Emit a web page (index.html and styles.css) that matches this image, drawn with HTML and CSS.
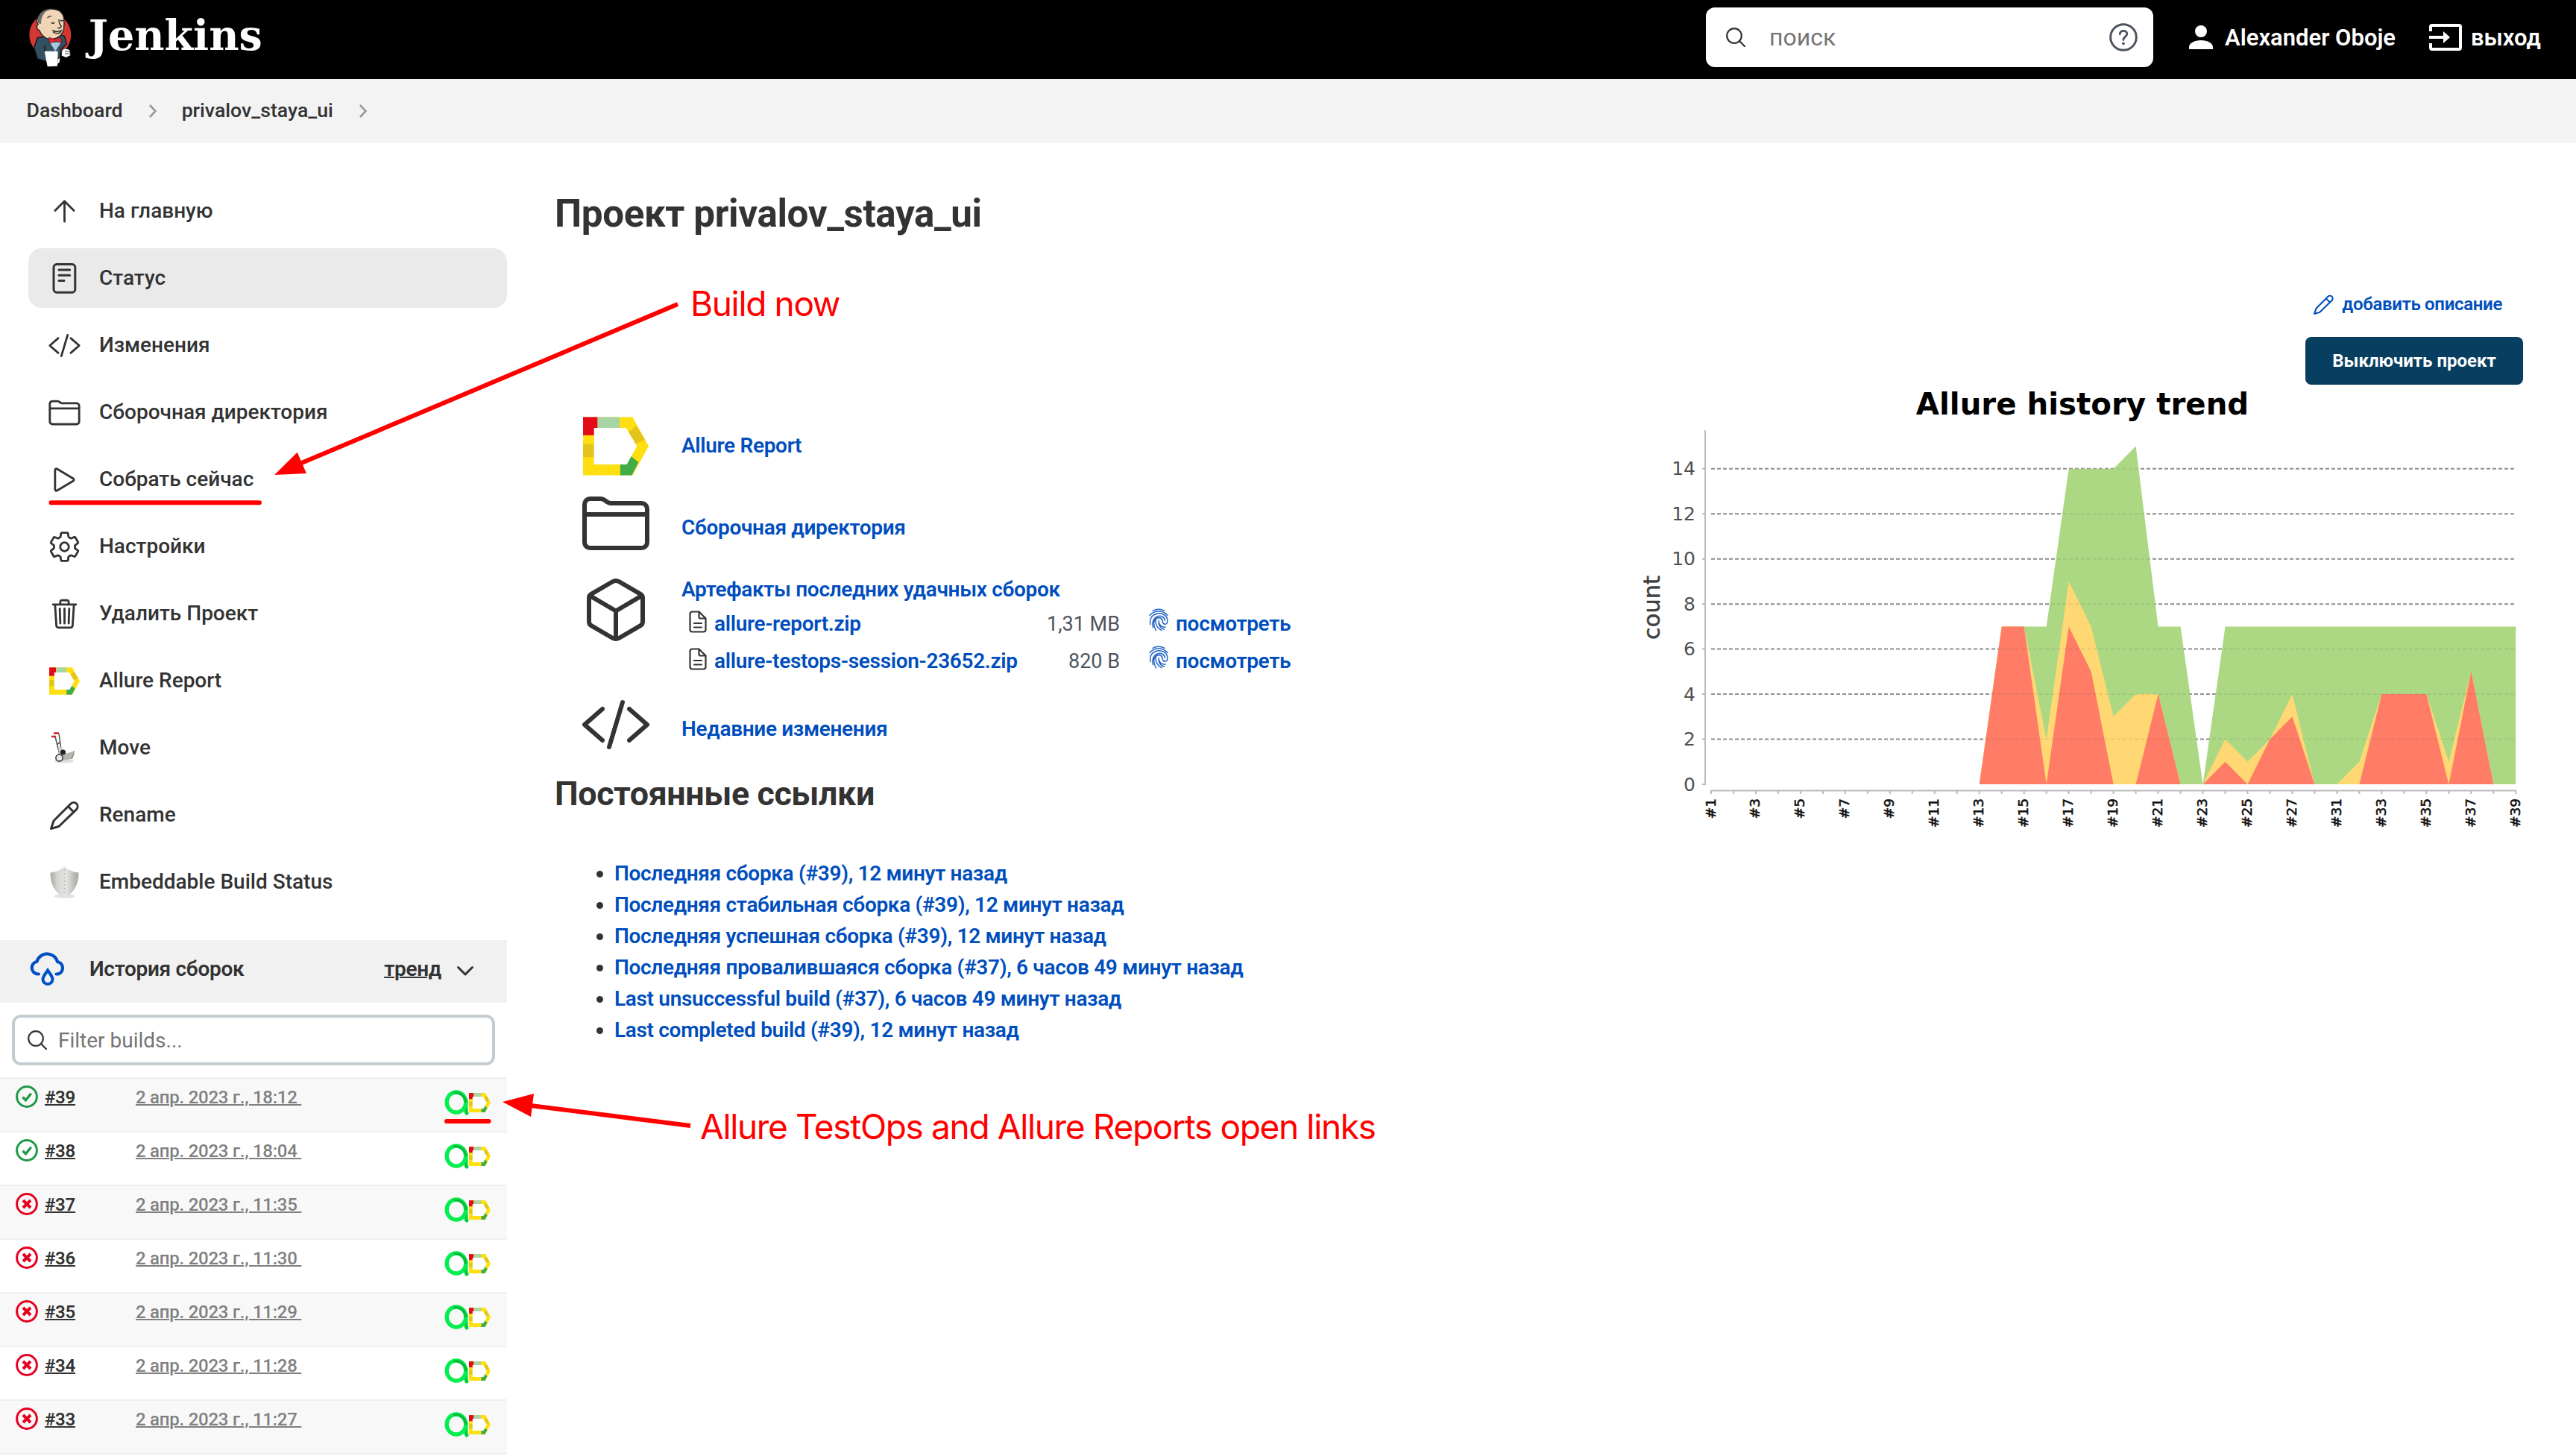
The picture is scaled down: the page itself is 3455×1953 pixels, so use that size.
FILE: index.html
```html
<!DOCTYPE html>
<html lang="ru">
<head>
<meta charset="utf-8">
<title>privalov_staya_ui [Jenkins]</title>
<link rel="stylesheet" href="styles.css">
</head>
<body>
<svg class="sprite" aria-hidden="true">
  <symbol id="i-up" viewBox="0 0 512 512"><path d="M112 244 256 100l144 144M256 120v292" class="ln"/></symbol>
  <symbol id="i-status" viewBox="0 0 45 45"><rect x="8" y="3.6" width="28.8" height="37.6" rx="4" class="ln3"/><path d="M15 11h14.6M15 18.2h14.6M15 25.4h7" class="ln3"/></symbol>
  <symbol id="i-code" viewBox="0 0 512 512"><path d="M160 368 32 256l128-112M352 368l128-112-128-112M304 96l-96 320" class="ln"/></symbol>
  <symbol id="i-folder" viewBox="0 0 512 512"><path d="M440 432H72a40 40 0 0 1-40-40V120a40 40 0 0 1 40-40h75.890a40 40 0 0 1 22.190 6.720l27.840 18.560A40 40 0 0 0 220.110 112H440a40 40 0 0 1 40 40v240a40 40 0 0 1-40 40ZM32 192h448" class="ln"/></symbol>
  <symbol id="i-play" viewBox="0 0 512 512"><path d="M112 111v290c0 17.440 17 28.520 31 20.160l247.900-148.370c12.120-7.250 12.120-26.330 0-33.580L143 90.840c-14-8.360-31 2.720-31 20.160z" class="ln"/></symbol>
  <symbol id="i-gear" viewBox="0 0 512 512"><circle cx="256" cy="256" r="66" class="ln"/><path d="M416.390 256a154.340 154.340 0 0 1-1.530 20.790l45.210 35.460a10.810 10.810 0 0 1 2.450 13.750l-42.770 74a10.810 10.810 0 0 1-13.140 4.590l-44.900-18.080a16.110 16.110 0 0 0-15.170 1.750A164.480 164.480 0 0 1 325 400.800a15.940 15.940 0 0 0-8.820 12.140l-6.730 47.890a11.080 11.080 0 0 1-10.680 9.170h-85.540a11.110 11.110 0 0 1-10.690-8.870l-6.720-47.820a16.070 16.070 0 0 0-9-12.220 155.300 155.300 0 0 1-21.460-12.570 16 16 0 0 0-15.110-1.710l-44.890 18.070a10.810 10.810 0 0 1-13.140-4.580l-42.770-74a10.800 10.800 0 0 1 2.450-13.750l38.210-30a16.050 16.050 0 0 0 6-14.080c-.360-4.170-.580-8.330-.580-12.500s.210-8.270.580-12.350a16 16 0 0 0-6.070-13.940l-38.190-30A10.810 10.810 0 0 1 49.480 186l42.770-74a10.810 10.810 0 0 1 13.140-4.590l44.900 18.080a16.110 16.110 0 0 0 15.170-1.750A164.480 164.480 0 0 1 187 111.200a15.940 15.940 0 0 0 8.820-12.140l6.730-47.890A11.080 11.080 0 0 1 213.230 42h85.540a11.110 11.110 0 0 1 10.690 8.870l6.720 47.820a16.070 16.070 0 0 0 9 12.220 155.300 155.300 0 0 1 21.460 12.570 16 16 0 0 0 15.110 1.710l44.890-18.070a10.810 10.810 0 0 1 13.140 4.580l42.770 74a10.800 10.800 0 0 1-2.450 13.750l-38.210 30a16.050 16.050 0 0 0-6.050 14.080c.330 4.140.550 8.300.550 12.470z" class="ln"/></symbol>
  <symbol id="i-trash" viewBox="0 0 512 512"><path d="M112 112l20 320c.950 18.490 14.400 32 32 32h184c17.670 0 30.870-13.510 32-32l20-320M80 112h352M192 112V72a23.930 23.930 0 0 1 24-24h80a23.930 23.930 0 0 1 24 24v40M256 176v224M184 176l8 224M328 176l-8 224" class="ln"/></symbol>
  <symbol id="i-allure" viewBox="0 0 90 80">
    <path fill="#ffdf10" d="M0 0h68l22 40-22 40H0z"/>
    <path fill="#e30b17" d="M0 0h20v25H0z"/><path fill="#a8d4a6" d="M20 0h30v15H20z"/>
    <path fill="#e2c518" d="M0 37h15v18H0zM59 24l14-12 12 19-13 6z"/>
    <path fill="#40ad49" d="M51 80V63l14-10 11 9-9 18z"/>
    <path class="hole" d="M15 15h44l15 25-14 25H15z"/>
  </symbol>
  <symbol id="i-pencil" viewBox="0 0 45 45"><path d="M4.500 40.500 8 30 31 7a5.400 5.400 0 0 1 7.600 0 5.400 5.400 0 0 1 0 7.600L15 37.500ZM27.500 10.800l7 7.200" class="ln3"/></symbol>
  <symbol id="i-truck" viewBox="0 0 45 45">
    <ellipse cx="22" cy="40" rx="13" ry="2.500" fill="#ddd"/>
    <path d="M10 7 16 31M15 3l3 22M12 18l4-3" stroke="#555" stroke-width="1.600" fill="none"/>
    <path d="M14 23l5-3 3 11-6 2z" fill="#c9ccc7"/><path d="M18 31l17-4v5l-2 5-14 2z" fill="#b4b6b1"/><path d="M35 26v4l-3 7" stroke="#777" fill="none"/>
    <path d="M5 7h6M8 2.500h7" stroke="#d2232a" stroke-width="2.500"/>
    <circle cx="20.500" cy="28" r="3.500" fill="#222"/><circle cx="15.500" cy="35.500" r="4.600" fill="#e8e8e8" stroke="#333" stroke-width="1.500"/>
  </symbol>
  <symbol id="i-shield" viewBox="0 0 45 45">
    <linearGradient id="sg"><stop offset="0" stop-color="#a6a8a3"/><stop offset=".25" stop-color="#d3d5d0"/><stop offset=".55" stop-color="#e6e7e4"/><stop offset="1" stop-color="#a3a5a0"/></linearGradient>
    <ellipse cx="22.500" cy="41" rx="14" ry="3" fill="#e2e2e2"/>
    <path d="M22.500 1C17 7 9 9 3.500 9.500 3.500 24 9 37 22.500 43 36 37 41.500 24 41.500 9.500 36 9 28 7 22.500 1z" fill="url(#sg)"/><path d="M22.500 5v34" stroke="#b9bbb6" stroke-width="2" stroke-dasharray="2 3"/>
  </symbol>
  <symbol id="i-search" viewBox="0 0 26 26"><circle cx="11" cy="11" r="9.800" class="ln2"/><path d="M18 18l7 7.200" class="ln2"/></symbol>
  <symbol id="i-chev" viewBox="0 0 12 20"><path d="M2 2l7.500 8L2 18" fill="none" stroke="#999" stroke-width="2.600"/></symbol>
  <symbol id="i-cube" viewBox="0 0 512 512"><path d="M448 341.370V170.610A32 32 0 0 0 432.110 143l-152-88.460a47.940 47.940 0 0 0-48.240 0L79.890 143A32 32 0 0 0 64 170.610v170.760A32 32 0 0 0 79.890 369l152 88.460a48 48 0 0 0 48.240 0l152-88.460A32 32 0 0 0 448 341.370zM69 153.990l187 110 187-110M256 463.990v-200" class="ln"/></symbol>
  <symbol id="i-doc" viewBox="0 0 24 30"><path d="M4.500 1.500h9l9 9v15a3 3 0 0 1-3 3h-15a3 3 0 0 1-3-3v-21a3 3 0 0 1 3-3zM13.500 1.500v7a2 2 0 0 0 2 2h7M7 17h10M7 22.500h10" class="ln2"/></symbol>
  <symbol id="i-finger" viewBox="0 0 26 32"><g fill="none" stroke="#2766c6" stroke-width="1.500" stroke-linecap="round">
    <path d="M5 3.300a18 18 0 0 1 16 0M1 9.500C7 2.300 19 2.300 25 9.500M2 21.500C-2 4 24 2 24.800 16c.1 3-.8 5-3 5.200-3.600.3-3.300-2.700-4-5.200-1.500-5-8.600-4-8.800 1-.1 5 3 10.500 8 12.500M5.500 25.500C1.500 8 21 6.500 21.400 16.500M9.500 30C0 12 17 8.500 18 16.500M13 16.500c0 5.500 4 9 9 8.600M13 20c1 4.500 3.500 7 7.500 8"/></g></symbol>
  <symbol id="i-ok" viewBox="0 0 32 32"><circle cx="16" cy="16" r="13.400" fill="none" stroke="#1e9a48" stroke-width="3"/><path d="M10.500 16.800l4 4 7.200-9" fill="none" stroke="#1e9a48" stroke-width="3.400"/></symbol>
  <symbol id="i-fail" viewBox="0 0 32 32"><circle cx="16" cy="16" r="13.400" fill="none" stroke="#e6001f" stroke-width="3"/><path d="M11 11l10 10M21 11 11 21" fill="none" stroke="#e6001f" stroke-width="4"/></symbol>
  <symbol id="i-testops" viewBox="0 0 32 34"><path d="M28.500 14v13c0 2 .4 3.500 1 4" fill="none" stroke="#00cf3c" stroke-width="5" stroke-linecap="round"/><ellipse cx="15.500" cy="16.500" rx="12.800" ry="13.500" fill="none" stroke="#05ee50" stroke-width="5.400"/><path d="M12 3.800C20 2.500 27.500 8 28.500 17" fill="none" stroke="#06b83c" stroke-width="3"/></symbol>
</svg>

<header class="topbar">
  <a class="brand">
    <svg class="butler" viewBox="50 25 180 248">
      <ellipse cx="141" cy="138" rx="84" ry="86" fill="#d33833"/>
      <path d="M90 150 76 190l14 45 40 12 50-12 5-40 22-20-8-30-22-10z" fill="#335061" stroke="#111" stroke-width="4"/>
      <path d="M98 60c-14 12-12 30-6 36-8 6-6 22 6 24 4 16 22 34 42 36 30 0 54-18 56-46 2-30 8-74-48-76-26 0-44 10-50 26z" fill="#f0d6b7" stroke="#222" stroke-width="4"/>
      <path d="M150 34c-34-2-66 22-58 58l12 2c0-18 6-38 20-50z" fill="#6d6b6d"/>
      <path d="M130 70q8-10 16-6M146 88q6 8 12 0M182 78q6 8 12 2M176 76q0 18 10 28-4 10-16 6M150 120q20 12 38-2M152 126q20 14 34-2" fill="none" stroke="#222" stroke-width="4"/>
      <path d="M140 170l22 34 24-38z" fill="#a9c7dd"/>
      <path d="M136 148l22 8 24-8 4 22-24-6-24 8z" fill="#e02a2f" stroke="#611" stroke-width="2"/>
      <path d="M118 204h54l-2 60-40 2z" fill="#fff"/><path d="M120 180v24M175 232v20" stroke="#111" stroke-width="4"/><path d="M172 236l8-4-2 18-8 4z" fill="#fff"/>
      <path d="M188 200l12-8 20 6 2 24-18 8-18-8z" fill="#fff" stroke="#222" stroke-width="3"/><path d="M200 204l16 2M200 213l16 2" stroke="#333" stroke-width="3"/>
    </svg>
    <span class="brand-name">Jenkins</span>
  </a>
  <div class="search">
    <svg class="ic-search"><use href="#i-search"/></svg>
    <span class="search-text">поиск</span>
    <svg class="ic-help" viewBox="0 0 38 38"><circle cx="19" cy="19" r="17.300" fill="none" stroke="#4d545d" stroke-width="3"/><path d="M14.300 14.800c.2-6 9.500-5.800 9.500-.3 0 3.700-4.900 3.700-4.900 8" fill="none" stroke="#4d545d" stroke-width="2.800" stroke-linecap="round"/><circle cx="18.900" cy="27.300" r="1.900" fill="#4d545d"/></svg>
  </div>
  <a class="user"><svg viewBox="0 0 32 32"><circle cx="16" cy="8" r="8" fill="#fff"/><path d="M0 32v-3c0-5 7-9 16-9s16 4 16 9v3z" fill="#fff"/></svg><span>Alexander Oboje</span></a>
  <a class="logout"><svg viewBox="0 0 44 36"><path d="M2 10V4a2 2 0 0 1 2-2h36a2 2 0 0 1 2 2v28a2 2 0 0 1-2 2H4a2 2 0 0 1-2-2v-6" fill="none" stroke="#fff" stroke-width="4"/><path d="M0 18h22" stroke="#fff" stroke-width="4"/><path d="M19 10l9 8-9 8z" fill="#fff"/></svg><span>выход</span></a>
</header>

<nav class="crumbs">
  <a>Dashboard</a><svg><use href="#i-chev"/></svg><a>privalov_staya_ui</a><svg><use href="#i-chev"/></svg>
</nav>

<div class="page">
  <aside>
    <div class="tasks">
      <a><svg><use href="#i-up"/></svg><span>На главную</span></a>
      <a class="active"><svg><use href="#i-status"/></svg><span>Статус</span></a>
      <a><svg><use href="#i-code"/></svg><span>Изменения</span></a>
      <a><svg><use href="#i-folder"/></svg><span>Сборочная директория</span></a>
      <a><svg><use href="#i-play"/></svg><span>Собрать сейчас</span></a>
      <a><svg><use href="#i-gear"/></svg><span>Настройки</span></a>
      <a><svg><use href="#i-trash"/></svg><span>Удалить Проект</span></a>
      <a><svg class="allure-sm"><use href="#i-allure"/></svg><span>Allure Report</span></a>
      <a><svg><use href="#i-truck"/></svg><span>Move</span></a>
      <a><svg><use href="#i-pencil"/></svg><span>Rename</span></a>
      <a><svg><use href="#i-shield"/></svg><span>Embeddable Build Status</span></a>
    </div>
    <section class="history">
      <div class="history-head">
        <svg class="cloud" viewBox="0 0 48 46"><path d="M12 29.500h-1.500A8.500 8.500 0 0 1 9.500 12.700 14.300 14.300 0 0 1 37 13a8.500 8.500 0 0 1 1 16.500h-2.500" fill="none" stroke="#004fc4" stroke-width="4.200" stroke-linecap="round"/><path d="M24 24.500c-3.300 5-6.500 8.500-6.500 12a6.500 6.500 0 0 0 13 0c0-3.500-3.200-7-6.500-12z" fill="none" stroke="#004fc4" stroke-width="4"/></svg>
        <span class="h-title">История сборок</span>
        <a class="h-trend">тренд</a>
        <svg class="h-chev" viewBox="0 0 24 15"><path d="M2.500 2.500 12 12l9.500-9.500" fill="none" stroke="#333" stroke-width="3" stroke-linecap="round" stroke-linejoin="round"/></svg>
      </div>
      <div class="filter"><svg class="ic-search"><use href="#i-search"/></svg><span>Filter builds...</span></div>
      <div class="builds">
        <div class="build"><svg class="st"><use href="#i-ok"/></svg><a class="num">#39</a><a class="date">2 апр. 2023 г., 18:12&nbsp;</a><svg class="to"><use href="#i-testops"/></svg><svg class="al"><use href="#i-allure"/></svg></div>
        <div class="build"><svg class="st"><use href="#i-ok"/></svg><a class="num">#38</a><a class="date">2 апр. 2023 г., 18:04&nbsp;</a><svg class="to"><use href="#i-testops"/></svg><svg class="al"><use href="#i-allure"/></svg></div>
        <div class="build"><svg class="st"><use href="#i-fail"/></svg><a class="num">#37</a><a class="date">2 апр. 2023 г., 11:35&nbsp;</a><svg class="to"><use href="#i-testops"/></svg><svg class="al"><use href="#i-allure"/></svg></div>
        <div class="build"><svg class="st"><use href="#i-fail"/></svg><a class="num">#36</a><a class="date">2 апр. 2023 г., 11:30&nbsp;</a><svg class="to"><use href="#i-testops"/></svg><svg class="al"><use href="#i-allure"/></svg></div>
        <div class="build"><svg class="st"><use href="#i-fail"/></svg><a class="num">#35</a><a class="date">2 апр. 2023 г., 11:29&nbsp;</a><svg class="to"><use href="#i-testops"/></svg><svg class="al"><use href="#i-allure"/></svg></div>
        <div class="build"><svg class="st"><use href="#i-fail"/></svg><a class="num">#34</a><a class="date">2 апр. 2023 г., 11:28&nbsp;</a><svg class="to"><use href="#i-testops"/></svg><svg class="al"><use href="#i-allure"/></svg></div>
        <div class="build"><svg class="st"><use href="#i-fail"/></svg><a class="num">#33</a><a class="date">2 апр. 2023 г., 11:27&nbsp;</a><svg class="to"><use href="#i-testops"/></svg><svg class="al"><use href="#i-allure"/></svg></div>
      </div>
    </section>
  </aside>

  <main>
    <section class="info">
      <h1>Проект privalov_staya_ui</h1>
      <div class="links">
        <div class="row r1"><svg class="allure-lg"><use href="#i-allure"/></svg><a>Allure Report</a></div>
        <div class="row r2"><svg><use href="#i-folder"/></svg><a>Сборочная директория</a></div>
        <div class="row r3"><svg><use href="#i-cube"/></svg>
          <div class="artifacts">
            <a class="a-title">Артефакты последних удачных сборок</a>
            <div class="file"><svg class="doc"><use href="#i-doc"/></svg><a>allure-report.zip</a><span class="size">1,31 MB</span><svg class="fp"><use href="#i-finger"/></svg><a>посмотреть</a></div>
            <div class="file"><svg class="doc"><use href="#i-doc"/></svg><a>allure-testops-session-23652.zip</a><span class="size">820 B</span><svg class="fp"><use href="#i-finger"/></svg><a>посмотреть</a></div>
          </div>
        </div>
        <div class="row r4"><svg><use href="#i-code"/></svg><a>Недавние изменения</a></div>
      </div>
      <h2>Постоянные ссылки</h2>
      <ul>
        <li><a>Последняя сборка (#39), 12 минут назад</a></li>
        <li><a>Последняя стабильная сборка (#39), 12 минут назад</a></li>
        <li><a>Последняя успешная сборка (#39), 12 минут назад</a></li>
        <li><a>Последняя провалившаяся сборка (#37), 6 часов 49 минут назад</a></li>
        <li><a>Last unsuccessful build (#37), 6 часов 49 минут назад</a></li>
        <li><a>Last completed build (#39), 12 минут назад</a></li>
      </ul>
    </section>
    <section class="side">
      <a class="describe"><svg><use href="#i-pencil"/></svg><span>добавить описание</span></a>
      <button class="disable"><span>Выключить проект</span></button>
      <svg class="chart" id="chart" viewBox="2190 516 1200 600"></svg>
    </section>
  </main>
</div>

<svg class="marks" viewBox="0 0 3455 1953">
  <g fill="none" stroke="#f00" stroke-width="6"><path d="M909 408 402 622"/><path d="M926 1510 712 1483"/><path d="M68.500 674.300H348M599 1504h56.500" stroke-linecap="round"/></g>
  <path fill="#f00" d="M368 637 398.700 606.700 411 635zM674 1478 716 1467 712 1498z"/>
</svg>
<span class="note note-build">Build now</span>
<span class="note note-links">Allure TestOps and Allure Reports open links</span>
<script src="chart.js"></script>
</body>
</html>
```
FILE: styles.css
```css
* { box-sizing: border-box; }
body { margin: 0; width: 3455px; height: 1953px; overflow: hidden; position: relative; background: #fff; color: #333; font-family: Roboto, "Noto Sans", sans-serif; font-size: 28px; }
svg { display: block; flex: none; overflow: visible; }
span, a { white-space: nowrap; }
.sprite { position: absolute; width: 0; height: 0; }
.ln { fill: none; stroke: currentColor; stroke-width: 32; stroke-linecap: round; stroke-linejoin: round; }
.ln3 { fill: none; stroke: currentColor; stroke-width: 3; stroke-linecap: round; stroke-linejoin: round; }
.ln2 { fill: none; stroke: currentColor; stroke-width: 2.2; stroke-linecap: round; stroke-linejoin: round; }
.hole { fill: #fff; }

.topbar { height: 106px; background: #000; display: flex; align-items: center; padding: 0 46px 6px 36.700px; color: #fff; }
.brand { display: flex; align-items: center; gap: 22px; }
.butler { width: 60px; height: 82.700px; }
.brand-name { font: bold 55.500px/60px "DejaVu Serif", serif; margin-bottom: 4px; }
.search { margin-left: auto; width: 600px; height: 80px; background: #fff; border-radius: 12px; display: flex; align-items: center; padding: 0 21px 0 27px; color: #333; }
.ic-search { width: 26px; height: 26px; }
.search-text { font-size: 32px; color: #757575; margin-left: 32px; }
.ic-help { width: 38px; height: 38px; margin-left: auto; }
.user, .logout { display: flex; align-items: center; font-weight: 600; font-size: 31px; }
.user { margin-left: 48px; width: 322px; gap: 16px; }
.user svg { width: 32px; height: 32px; }
.logout { width: 151px; gap: 12px; }
.logout svg { width: 44px; height: 36px; }

.crumbs { height: 86px; background: #f3f3f3; display: flex; align-items: center; padding: 0 0 2px 35.500px; font-size: 26.700px; font-weight: 500; }
.crumbs svg { width: 12px; height: 20px; margin: 2px 33px 0 34px; }

.page { display: grid; grid-template-columns: 680px 1fr; }
.tasks { padding: 51px 0 0 38px; }
.tasks a { display: flex; align-items: center; height: 80px; margin-bottom: 10px; padding-left: 26px; border-radius: 18px; font-size: 28px; font-weight: 500; }
.tasks a.active { background: #eaeaea; }
.tasks svg { width: 45px; height: 45px; margin-right: 24px; }
.tasks span { margin-bottom: 2px; }
.tasks .allure-sm { width: 41px; height: 37px; margin: 0 26px 0 2px; }
.history { margin-top: 38px; }
.history-head { height: 84px; background: #f1f1f1; display: flex; align-items: center; padding: 0 44px 8px 40px; font-weight: 600; letter-spacing: -.3px; }
.cloud { width: 48px; height: 46px; margin-right: 32px; margin-top: 2px; }
.h-trend { margin-left: auto; text-decoration: underline; text-decoration-thickness: 2px; }
.h-chev { width: 24px; height: 15px; margin-left: 20px; margin-top: 6px; }
.filter { margin: 16px 16px 16px; height: 68px; border: 4px solid #c3ccd1; border-radius: 12px; display: flex; align-items: center; padding-left: 17px; }
.filter span { margin-left: 15px; color: #757575; }
.build { height: 72px; border-top: 2px solid #efefef; display: grid; grid-template-columns: 40px 122px 1fr 33px 29px; padding: 0 22px 0 20px; align-items: start; background: #fff; font-size: 24px; line-height: 28px; letter-spacing: -.25px; }
.build:nth-child(odd) { background: #f8f8f8; }
.build:nth-child(odd) .hole { fill: #f8f8f8; }
.builds { border-bottom: 2px solid #efefef; }
.build a { text-decoration: underline; text-decoration-thickness: 2px; margin-top: 11px; }
.build .num, .build .date { justify-self: start; }
.num { font-weight: 600; }
.date { color: #808080; font-weight: 500; }
.st { width: 32px; height: 32px; margin-top: 8px; }
.to { width: 33px; height: 34px; margin-top: 15px; }
.al { width: 29px; height: 26px; margin-top: 19px; }

main { display: grid; grid-template-columns: 1445px 1fr; padding-left: 65px; }
h1, h2 { margin: 0 0 0 -1px; font-weight: 700; letter-spacing: -.4px; }
h1 { font-size: 51.200px; line-height: 60px; margin-top: 65px; }
h2 { font-size: 44.800px; line-height: 56px; margin-top: 5px; }
.info a, .describe { color: #004ebd; font-weight: 600; letter-spacing: -.32px; }
.links { margin-top: 233px; padding-left: 33px; }
.row { display: flex; }
.row > svg { width: 96px; height: 96px; margin-right: 40px; }
.row > .allure-lg { width: 88px; height: 79px; margin: 9px 44px 8px 4px; }
.row > a { line-height: 108px; }
.r1 > a { line-height: 96px; }
.r2 { margin-top: 8px; }
.r3 { margin-top: 8px; }
.r4 { margin-top: 12px; }
.a-title { display: block; line-height: 42px; }
.file { display: grid; grid-template-columns: 34px 430px 114px 75px auto; line-height: 50px; padding-left: 10px; }
.size { text-align: right; color: #4d545d; font-size: 27px; }
.doc { width: 24px; height: 30px; margin-top: 7px; }
.fp { width: 26px; height: 32px; margin: 4px 0 0 39px; }
ul { margin: 58px 0 0; padding-left: 79px; }
li { line-height: 42px; }

.side { display: flex; flex-direction: column; align-items: flex-end; padding-right: 71px; padding-top: 192px; }
.describe { display: flex; align-items: center; height: 48px; gap: 9px; font-size: 24px; margin-right: 28px; }
.describe svg { width: 31px; height: 31px; }
.disable { margin-top: 20px; width: 292px; height: 64px; border: 0; border-radius: 8px; background: #083e5f; color: #fff; font: 700 24px Roboto, sans-serif; padding: 0; }
.chart { width: 1200px; height: 600px; margin-right: -6px; }
.chart text { font-family: "DejaVu Sans", sans-serif; }

.marks { position: absolute; left: 0; top: 0; width: 3455px; height: 1953px; pointer-events: none; }
.note { position: absolute; color: #f00; font: 400 46px/56px Inter, sans-serif; letter-spacing: -1.350px; }
.note-build { left: 926px; top: 379px; }
.note-links { left: 939px; top: 1483px; }
```
FILE: chart.js
```js
const svg = document.getElementById('chart');
const X0 = 2295, STEP = 29.98, Y0 = 1052, UNIT = 30.23;
const failed = [0,0,0,0,0,0,0,0,0,0,0,0,0,7,7,0,7,5,0,0,4,0,0,1,0,2,3,0,0,0,4,4,4,0,5,0,0];
const broken = [0,0,0,0,0,0,0,0,0,0,0,0,0,7,7,2,9,7,3,4,4,0,0,2,1,2,4,0,0,1,4,4,4,1,5,0,0];
const passed = [0,0,0,0,0,0,0,0,0,0,0,0,0,7,7,7,14,14,14,15,7,7,0,7,7,7,7,7,7,7,7,7,7,7,7,7,7];
const x = i => X0 + i * STEP, y = v => Y0 - v * UNIT;
const area = (d, c) => `<path fill="${c}" d="M${x(0)} ${Y0}${d.map((v, i) => `L${x(i)} ${y(v)}`).join('')}L${x(36)} ${Y0}z"/>`;
let grid = '', labels = '', ticks = '';
for (let v = 0; v <= 14; v += 2) {
  if (v) grid += `M${X0} ${y(v)}H${x(36)}`;
  ticks += `M2283 ${y(v)}h4`;
  labels += `<text x="2274" y="${y(v) + 8.5}" font-size="25" text-anchor="end" fill="#505050">${v}</text>`;
}
for (let i = 0; i <= 36; i++) {
  ticks += `M${x(i)} 1060v5`;
  if (i % 2 === 0) {
    const n = i <= 26 ? i + 1 : i + 3;
    labels += `<text transform="translate(${x(i) + 5.5} 1071) rotate(-90)" font-size="18.500" text-anchor="end" fill="#111" stroke="#111" stroke-width=".6">#${n}</text>`;
  }
}
svg.innerHTML = `
  <path d="${grid}" stroke="#999" stroke-width="2" stroke-dasharray="5 3" fill="none"/>
  ${area(passed, '#acd883')}${area(broken, '#ffd874')}${area(failed, '#ff7d66')}
  <path d="${grid}" stroke="#555" stroke-width="2" stroke-dasharray="5 3" fill="none" opacity=".13"/>
  <path d="M2287 577V1053M${X0} 1060.500H${x(36)}${ticks}" stroke="#bbb" stroke-width="2" fill="none"/>
  ${labels}
  <text x="2793" y="556" font-size="40.300" font-weight="bold" text-anchor="middle" fill="#000">Allure history trend</text>
  <text transform="translate(2226 815) rotate(-90)" font-size="30.500" text-anchor="middle" fill="#404040" stroke="#404040" stroke-width=".5">count</text>`;
```
